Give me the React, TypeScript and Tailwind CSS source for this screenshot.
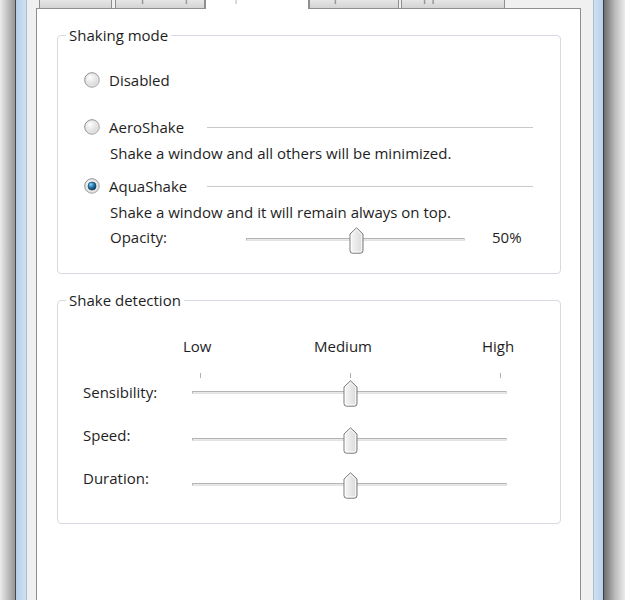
import { useId } from "react"

const tabs: { label: string; w: string; ml: string; active?: boolean }[] = [
  { label: "General", w: "w-[73px]", ml: "ml-[3px]" },
  { label: "AquaSnap", w: "w-[90px]", ml: "ml-[3px]" },
  { label: "AquaShake", w: "w-[104px]", ml: "ml-0", active: true },
  { label: "AquaGlass", w: "w-[90px]", ml: "ml-0" },
  { label: "Appearance", w: "w-[104px]", ml: "ml-[2px]" },
]

function Radio({ checked }: { checked?: boolean }) {
  const id = useId()
  return (
    <svg width="16" height="16" viewBox="0 0 16 16" className="shrink-0">
      <defs>
        <linearGradient id={id + "b"} x1="0" y1="0" x2="1" y2="1">
          <stop offset="0" stopColor="#7f7f7f" />
          <stop offset="1" stopColor="#bdbdbd" />
        </linearGradient>
        <radialGradient id={id + "f"} cx="0.35" cy="0.3" r="0.8">
          <stop offset="0" stopColor="#ffffff" />
          <stop offset="1" stopColor="#cfcfcf" />
        </radialGradient>
        <radialGradient id={id + "d"} cx="0.35" cy="0.3" r="0.75">
          <stop offset="0" stopColor="#8fd6f5" />
          <stop offset="0.45" stopColor="#2b87bd" />
          <stop offset="1" stopColor="#0b2f4c" />
        </radialGradient>
      </defs>
      <circle cx="8" cy="8" r="7.3" fill={`url(#${id}f)`} stroke={`url(#${id}b)`} strokeWidth="1" />
      <circle cx="8" cy="8" r="5.6" fill="none" stroke="#e9e9e9" strokeWidth="0.8" />
      {checked && <circle cx="8" cy="8" r="4" fill={`url(#${id}d)`} stroke="#17415f" strokeWidth="0.7" />}
    </svg>
  )
}

function Thumb() {
  const id = useId()
  return (
    <svg width="15" height="27" viewBox="0 0 15 27">
      <defs>
        <linearGradient id={id + "t"} x1="0" y1="0" x2="1" y2="0">
          <stop offset="0" stopColor="#f7f7f7" />
          <stop offset="1" stopColor="#d9d9d9" />
        </linearGradient>
      </defs>
      <path
        d="M7.5 0.8 L14 7 V23.5 Q14 26.2 11.5 26.2 H3.5 Q1 26.2 1 23.5 V7 Z"
        fill={`url(#${id}t)`}
        stroke="#7a7a7a"
        strokeWidth="1"
      />
      <path d="M7.5 2.3 L12.6 7.4 V23.3 Q12.6 24.8 11.2 24.8 H3.8 Q2.4 24.8 2.4 23.3 V7.4 Z" fill="none" stroke="#ffffff" strokeWidth="0.8" />
    </svg>
  )
}

function Slider({ width, value }: { width: number; value: number }) {
  const left = 9 + value * (width - 16) - 7.5
  return (
    <div className="relative h-[28px] shrink-0" style={{ width }}>
      <div className="absolute left-0 right-0 top-[12px] h-[3px] rounded-[1px] border border-[#b4b4b4] border-b-[#e2e2e2] border-r-[#d6d6d6] bg-[#e9e9e9]" />
      <div className="absolute top-[1px]" style={{ left }}>
        <Thumb />
      </div>
    </div>
  )
}

function Group({ title, children, className }: { title: string; children: React.ReactNode; className?: string }) {
  return (
    <fieldset className={"rounded-[4px] border border-[#d5dbe0] " + (className ?? "")}>
      <legend className="ml-[8px] px-[3px] leading-[20px]">{title}</legend>
      {children}
    </fieldset>
  )
}

function Mode({ label, checked }: { label: string; checked?: boolean }) {
  return (
    <div className="flex h-[20px] items-center">
      <div className="flex w-[123px] items-center gap-[9px]">
        <Radio checked={checked} />
        <span className="leading-[20px]">{label}</span>
      </div>
      <div className="h-px flex-1 bg-[#c9c9c9]" />
    </div>
  )
}

const detection: { label: string; mt: string; lt: string }[] = [
  { label: "Sensibility:", mt: "mt-[1px]", lt: "mt-[3px]" },
  { label: "Speed:", mt: "mt-[19px]", lt: "mt-[-1px]" },
  { label: "Duration:", mt: "mt-[17px]", lt: "mt-[-3px]" },
]

export default function App() {
  return (
    <div className="flex h-[600px] w-[625px] overflow-hidden bg-white font-['Open_Sans',sans-serif] text-[15px] text-[#1e1e1e]">
      {/* left frame */}
      <div className="w-[15px] bg-gradient-to-r from-[#ececec] to-[#979797]" />
      <div className="w-px bg-[#474747]" />
      <div className="w-[10px] bg-gradient-to-r from-[#b7d0ea] to-[#cfe1f3]" />
      <div className="w-px bg-[#aebbc8]" />

      {/* client */}
      <div className="flex w-[566px] flex-col bg-[#f0f0f0] pl-[9px] pr-[12px]">
        <div className="flex h-[8px] items-start">
          {tabs.map((t) => (
            <div
              key={t.label}
              className={
                t.w + " " + t.ml + " overflow-hidden border-x border-[#8e8f8f] text-center text-[14px] " +
                (t.active ? "relative z-10 h-[9px] bg-white text-[#c4c4c4]" : "h-[8px] bg-gradient-to-b from-[#e6e6e6] to-[#d4d4d4] text-[#8a8a8a]")
              }
            >
              <div className="mt-[-13px] leading-[16px]">{t.label}</div>
            </div>
          ))}
        </div>

        <div className="flex-1 border border-b-0 border-[#8e8f8f] bg-white px-[20px] pr-[19px] pt-[16px]">
          <Group title="Shaking mode">
            <div className="flex flex-col pb-[19px] pl-[26px] pr-[27px]">
              <div className="mt-[25px] flex h-[20px] items-center gap-[9px]">
                <Radio />
                <span className="leading-[20px]">Disabled</span>
              </div>
              <div className="mt-[27px]">
                <Mode label="AeroShake" />
              </div>
              <div className="mt-[6px] pl-[26px] leading-[20px]">Shake a window and all others will be minimized.</div>
              <div className="mt-[13px]">
                <Mode label="AquaShake" checked />
              </div>
              <div className="mt-[6px] pl-[26px] leading-[20px]">Shake a window and it will remain always on top.</div>
              <div className="mt-[4px] flex h-[28px] items-start pl-[26px]">
                <span className="mt-[1px] w-[136px] leading-[20px]">Opacity:</span>
                <Slider width={219} value={0.5} />
                <span className="ml-[27px] mt-[1px] leading-[20px]">50%</span>
              </div>
            </div>
          </Group>

          <Group title="Shake detection" className="mt-[16px]">
            <div className="flex flex-col pb-[24px]">
              <div className="mt-[26px] flex h-[20px] leading-[20px]">
                <span className="ml-[125px] w-[131px]">Low</span>
                <span className="w-[168px]">Medium</span>
                <span>High</span>
              </div>
              <div className="mt-[17px] flex h-[5px]">
                <div className="ml-[142px] w-px bg-[#b0b0b0]" />
                <div className="ml-[149px] w-px bg-[#b0b0b0]" />
                <div className="ml-[149px] w-px bg-[#b0b0b0]" />
              </div>
              {detection.map((d) => (
                <div key={d.label} className={d.mt + " flex h-[28px] items-start pl-[25px]"}>
                  <span className={d.lt + " w-[109px] leading-[20px]"}>{d.label}</span>
                  <Slider width={315} value={0.5} />
                </div>
              ))}
            </div>
          </Group>
        </div>
      </div>

      {/* right frame */}
      <div className="w-px bg-[#aebbc8]" />
      <div className="w-[9px] bg-gradient-to-r from-[#cfe1f3] to-[#b7d0ea]" />
      <div className="w-px bg-[#3d3d3d]" />
      <div className="w-[21px] bg-gradient-to-r from-[#6e6e6e] via-[#b8b8b8] to-[#ececec]" />
    </div>
  )
}
